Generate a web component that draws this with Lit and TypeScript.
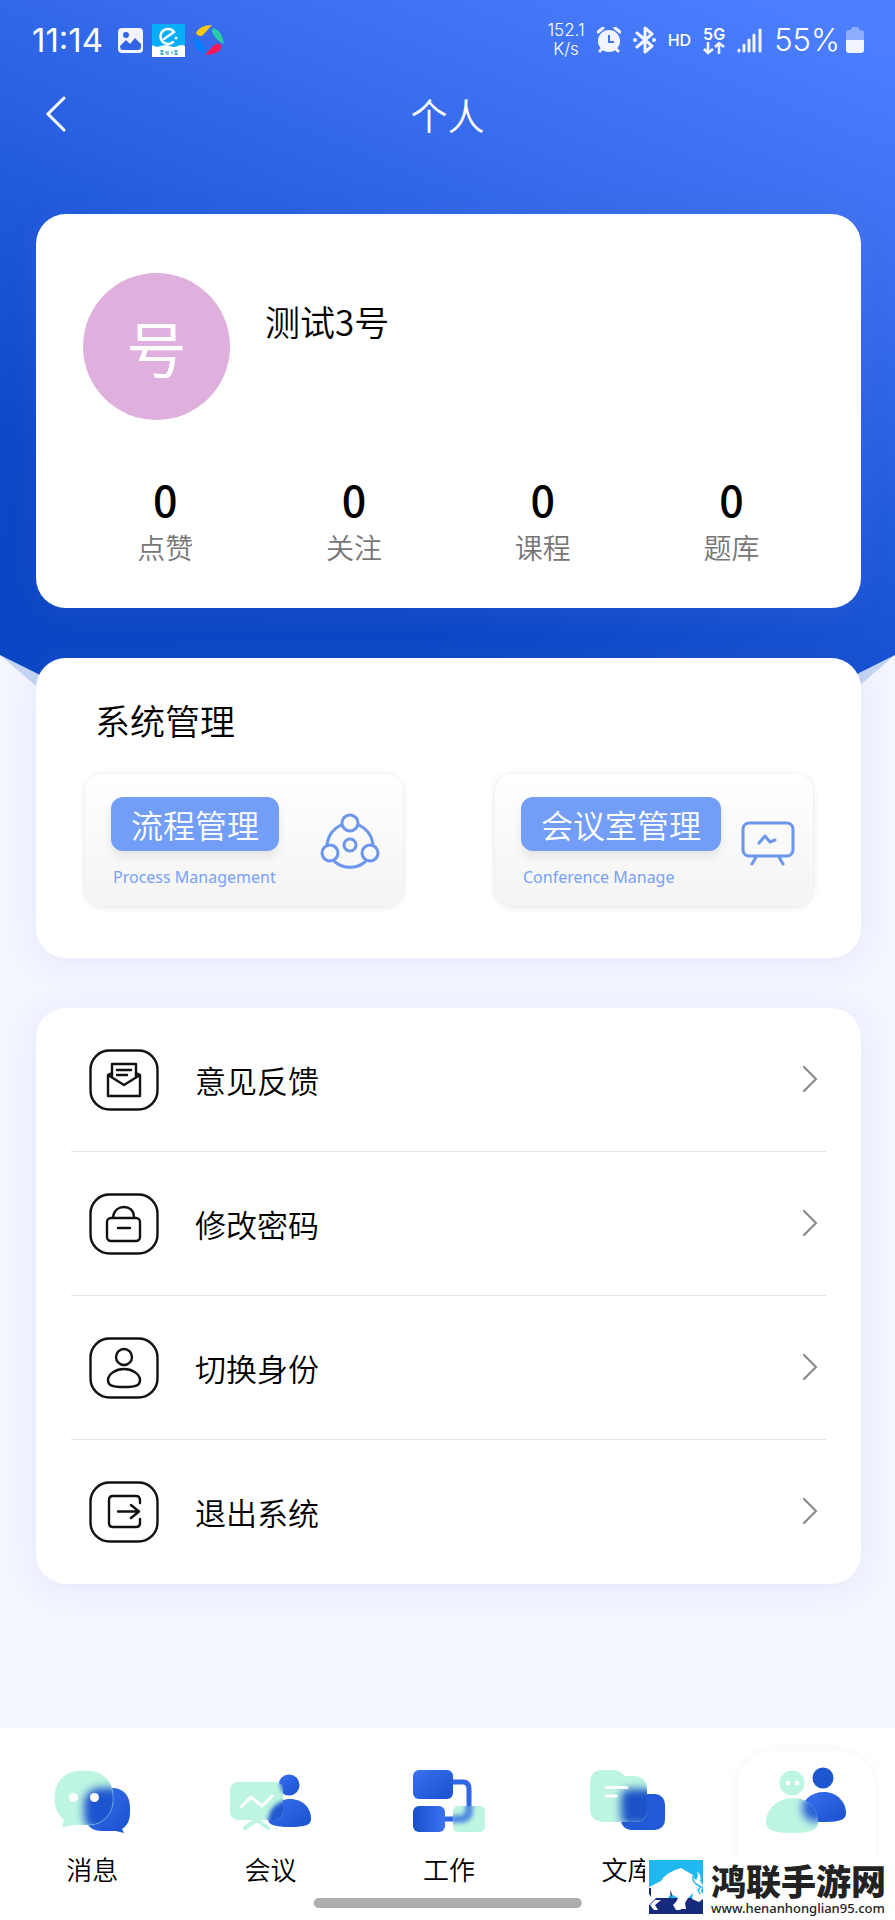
import { LitElement, html, css, svg, TemplateResult } from 'lit'
import { customElement, property, state } from 'lit/decorators.js'
import { classMap } from 'lit/directives/class-map.js'

interface Stat {
  label: string
  value: number
}

interface MenuItem {
  label: string
  icon: TemplateResult
}

interface Tab {
  id: string
  label: string
  icon: TemplateResult
}

const stats: Stat[] = [
  { label: '点赞', value: 0 },
  { label: '关注', value: 0 },
  { label: '课程', value: 0 },
  { label: '题库', value: 0 },
]

const menuItems: MenuItem[] = [
  {
    label: '意见反馈',
    icon: svg`
      <path d="M22 27V14H46V27"/>
      <path d="M27 20H41M27 25H37"/>
      <path d="M22 23L18 25V46H50V25L46 23M18 25L34 35L50 25"/>`,
  },
  {
    label: '修改密码',
    icon: svg`
      <rect x="17" y="24" width="33" height="23" rx="4"/>
      <path d="M23 23C24 16 29 13 34 13S44 16 44 23M28 34H40"/>`,
  },
  {
    label: '切换身份',
    icon: svg`
      <circle cx="34" cy="19" r="8"/>
      <path d="M18 42C18 36 26 31 34 31S50 36 50 42C50 47 47 49 34 49S18 47 18 42Z"/>`,
  },
  {
    label: '退出系统',
    icon: svg`
      <path d="M50 21V18Q50 14 46 14H23Q19 14 19 18V41Q19 45 23 45H46Q50 45 50 41V37"/>
      <path d="M28 29.500H49M41 23L49 29.500L41 36"/>`,
  },
]

const tabs: Tab[] = [
  {
    id: 'message',
    label: '消息',
    icon: svg`
      <defs>
        <clipPath id="message-clip"><rect x="3" y="5" width="58" height="54" rx="24"/></clipPath>
      </defs>
      <path fill="url(#blue)" d="M54 22H60C72 22 78 30 78 42V46C78 54 76 59 70 63L72 67L64 65H50Q35 65 32 50V40Q34 22 54 22Z"/>
      <rect x="3" y="5" width="58" height="54" rx="24" fill="#bdf5e1"/>
      <path fill="#bdf5e1" d="M13 50L10 61L22 59L30 55Z"/>
      <g clip-path="url(#message-clip)">
        <rect x="32" y="22" width="46" height="44" rx="16" fill="#1d55cf" filter="url(#frost)"/>
      </g>
      <rect x="3" y="5" width="58" height="54" rx="24" fill="none" stroke="#bdf5e1" stroke-opacity=".35"/>
      <circle cx="21.500" cy="31.500" r="4.500" fill="#fff"/>
      <circle cx="42.500" cy="31.500" r="4.500" fill="#fff"/>`,
  },
  {
    id: 'meeting',
    label: '会议',
    icon: svg`
      <defs>
        <clipPath id="meeting-clip"><rect x="-1" y="16" width="53" height="38" rx="8"/></clipPath>
      </defs>
      <circle cx="58" cy="19" r="10.500" fill="url(#blue)"/>
      <path fill="url(#blue)" d="M37 53C37 42 46 33 59 33S80 42 80 53C80 59 74 61 59 61S37 59 37 53Z"/>
      <path d="M26 54L14 62M26 54L37 62" stroke="#bdf5e1" stroke-width="4" stroke-linecap="round" fill="none"/>
      <rect x="-1" y="16" width="53" height="38" rx="8" fill="#bdf5e1"/>
      <g clip-path="url(#meeting-clip)">
        <g filter="url(#soft)">
          <circle cx="59" cy="19" r="10" fill="#3a70dc"/>
          <path fill="#2158d0" d="M37 56C37 44 46 34 59 34V62H38Z"/>
        </g>
      </g>
      <path d="M10 41L20 31L31 40L41 30" stroke="#fff" stroke-width="3" stroke-linecap="round" stroke-linejoin="round" fill="none"/>`,
  },
  {
    id: 'work',
    label: '工作',
    icon: svg`
      <defs>
        <clipPath id="work-clip"><rect x="44" y="40" width="32" height="26" rx="5"/></clipPath>
      </defs>
      <path d="M43 16H54Q60 16 60 23V41M35 53H46" stroke="#2f66e6" stroke-width="5" fill="none"/>
      <rect x="4" y="4" width="40" height="29" rx="6" fill="url(#blue)"/>
      <rect x="4" y="40" width="32" height="26" rx="6" fill="url(#blue-rev)"/>
      <rect x="44" y="40" width="32" height="26" rx="5" fill="#bdf5e1"/>
      <g clip-path="url(#work-clip)">
        <path d="M60 36V44Q60 53 50 53H42" stroke="#3a70e0" stroke-opacity=".8" stroke-width="8" fill="none" filter="url(#soft)"/>
      </g>`,
  },
  {
    id: 'library',
    label: '文库',
    icon: svg`
      <defs>
        <clipPath id="library-clip"><path d="M14 4H27Q32 4 38 10H48Q60 11 60 24V44Q60 56 48 56H15Q3 54 3 43V16Q3 5 14 4Z"/></clipPath>
      </defs>
      <rect x="34" y="28" width="44" height="36" rx="10" fill="#2259d4"/>
      <path fill="#bdf5e1" d="M14 4H27Q32 4 38 10H48Q60 11 60 24V44Q60 56 48 56H15Q3 54 3 43V16Q3 5 14 4Z"/>
      <g clip-path="url(#library-clip)">
        <rect x="34" y="23" width="36" height="36" rx="8" fill="#1a52c8" filter="url(#frost)"/>
      </g>
      <path d="M19 21.500H40M19 30H29" stroke="#fff" stroke-width="3" stroke-linecap="round"/>`,
  },
  {
    id: 'profile',
    label: '个人',
    icon: svg`
      <defs>
        <clipPath id="profile-clip"><path d="M0 56C0 43 12 32 27 32S52 43 52 56C52 64 44 67 27 67S0 65 0 56Z"/></clipPath>
      </defs>
      <circle cx="57" cy="12" r="10.500" fill="#1d56cf"/>
      <path fill="url(#blue)" d="M35 46C36 34 45 26 58 26S80 36 80 47C80 53 75 56 58 56S35 55 35 46Z"/>
      <circle cx="26" cy="17" r="12.500" fill="#bdf5e1"/>
      <path fill="#bdf5e1" d="M0 56C0 43 12 32 27 32S52 43 52 56C52 64 44 67 27 67S0 65 0 56Z"/>
      <g clip-path="url(#profile-clip)">
        <circle cx="50" cy="42" r="14" fill="#2a62d8" filter="url(#frost)"/>
      </g>
      <circle cx="22" cy="17" r="2.500" fill="#fff"/>
      <circle cx="31" cy="17" r="2.500" fill="#fff"/>`,
  },
]

@customElement('status-bar')
export class StatusBar extends LitElement {
  static styles = css`
  :host {
    display: flex;
    align-items: center;
    justify-content: space-between;
    height: 80px;
    padding: 0 31px 0 32px;
    color: #fff;
    font-family: Inter, "Noto Sans", sans-serif;
    font-weight: 400;
  }
  .group {
    display: flex;
    align-items: center;
  }
  .left {
    gap: 8px;
  }
  .right {
    gap: 12px;
  }
  svg {
    display: block;
  }
  .time {
    font-size: 33px;
    line-height: 40px;
    margin-right: 6px;
  }
  .speed {
    font-size: 17px;
    line-height: 19px;
    font-weight: 300;
    text-align: center;
  }
  .speed span {
    display: block;
  }
  .hd {
    font-size: 16px;
    line-height: 24px;
    font-weight: 500;
  }
  .network {
    font-size: 16px;
    line-height: 16px;
    font-weight: 600;
  }
  .battery {
    display: flex;
    align-items: center;
    gap: 6px;
    font-size: 31px;
    line-height: 40px;
    font-weight: 300;
  }
  `

  render() {
    return html`
    <div class="group left">
      <span class="time">11:14</span>
      <svg width="27" height="27" viewBox="0 0 27 27">
        <rect x="1" y="1" width="25" height="25" rx="4" fill="#f2f5ff"/>
        <circle cx="9" cy="8" r="3" fill="#3265e5"/>
        <path d="M3 19L9 13L13 17L18 11L24 17V20Q24 23 21 23H6Q3 23 3 19Z" fill="#3265e5"/>
      </svg>
      <svg width="33" height="33" viewBox="0 0 33 33">
        <rect width="33" height="33" fill="#08aefa"/>
        <path d="M0 21Q4 24 9 22T18 22T26 22T33 22V33H0Z" fill="#fff"/>
        <path d="M12 15L22 8A7.500 7.500 0 1 0 21 18" fill="none" stroke="#fff" stroke-width="2.500" stroke-linecap="round"/>
        <circle cx="24" cy="14" r="1.500" fill="#fff"/>
        <path d="M8 27H12M8 30H12M10 26V31M14 27V30H17M16 27V29M20 30V27M22 27H26M22 30H26M24 26V31" stroke="#129bb5" fill="none"/>
      </svg>
      <svg width="32" height="32" viewBox="0 0 32 32">
        <path d="M3 9Q7 1 19 1L10 11Q6 14 3 9Z" fill="#ffca10"/>
        <path d="M20 4Q29 6 31 20Q24 17 20 10Q18 6 20 4Z" fill="#28cfa4"/>
        <path d="M28 21Q29 30 12 31L20 22Q25 18 28 21Z" fill="#ff1654"/>
        <path d="M1 13Q6 14 11 22Q13 27 10 30Q0 25 1 13Z" fill="#087cff"/>
      </svg>
    </div>
    <div class="group right">
      <div class="speed"><span>152.1</span><span>K/s</span></div>
      <svg width="24" height="26" viewBox="0 0 24 26">
        <circle cx="12" cy="14" r="11" fill="#f2f5ff"/>
        <path d="M1 5L6 1M23 5L18 1M3 24L6 21M21 24L18 21" stroke="#f2f5ff" stroke-width="3" stroke-linecap="round"/>
        <path d="M12 8V15H17" fill="none" stroke="#4273f5" stroke-width="2"/>
      </svg>
      <svg width="23" height="28" viewBox="0 0 23 28">
        <path d="M4 7L19 20L12 26V2L19 8L4 21" fill="none" stroke="#f2f5ff" stroke-width="3" stroke-linejoin="round" stroke-linecap="round"/>
        <circle cx="2" cy="14" r="2" fill="#f2f5ff"/>
        <circle cx="21" cy="14" r="2" fill="#f2f5ff"/>
      </svg>
      <span class="hd">HD</span>
      <div class="network">
        5G
        <svg width="22" height="13" viewBox="0 0 22 13">
          <path d="M5 0V11M1 7L5 11L10 7M16 12V1M12 5L16 1L21 5" fill="none" stroke="#f2f5ff" stroke-width="2.500"/>
        </svg>
      </div>
      <svg width="25" height="25" viewBox="0 0 25 25">
        <path d="M2 22V23M7 17V23M12 12V23M17 7V23M23 2V23" stroke="#f2f5ff" stroke-width="3" stroke-linecap="round"/>
      </svg>
      <div class="battery">
        55%
        <svg width="18" height="26" viewBox="0 0 18 26">
          <path d="M5 2Q5 0 7 0H11Q13 0 13 2V3H15Q18 3 18 6V14H0V6Q0 3 3 3H5Z" fill="#8eadff"/>
          <path d="M0 13H18V23Q18 26 15 26H3Q0 26 0 23Z" fill="#f2f5ff"/>
        </svg>
      </div>
    </div>
    `
  }
}

@customElement('menu-row')
export class MenuRow extends LitElement {
  @property() label = ''
  @property({ attribute: false }) icon?: TemplateResult

  static styles = css`
  :host {
    display: block;
  }
  .row {
    display: flex;
    align-items: center;
    width: 100%;
    height: 144px;
    padding: 0 8px 0 18px;
    border: 0;
    background: none;
    color: #000;
    font-family: inherit;
    font-size: 31px;
    line-height: 40px;
    font-weight: inherit;
    text-align: left;
    cursor: pointer;
  }
  .icon {
    width: 71px;
    height: 62px;
    margin-right: 35px;
    fill: none;
    stroke: #111;
    stroke-linejoin: round;
    stroke-linecap: round;
  }
  .label {
    flex: 1;
  }
  .arrow {
    fill: none;
    stroke: #888;
    stroke-width: 2;
    stroke-linecap: round;
  }
  `

  render() {
    return html`
    <button class="row" type="button">
      <svg class="icon" viewBox="-1 -1 71 62" stroke-width="2.400">
        <rect x="0.500" y="0.500" width="67" height="59" rx="19"/>
        ${this.icon}
      </svg>
      <span class="label">${this.label}</span>
      <svg class="arrow" width="16" height="28" viewBox="0 0 16 28">
        <path d="M2 1L14 13L2 25"/>
      </svg>
    </button>
    `
  }
}

@customElement('site-badge')
export class SiteBadge extends LitElement {
  static styles = css`
  :host {
    display: flex;
    gap: 8px;
    padding: 5px 0 4px 4px;
    background: #fff;
    color: #222;
  }
  svg {
    display: block;
  }
  .name {
    font-size: 35px;
    line-height: 40px;
    font-weight: 900;
  }
  .url {
    font-family: "Noto Sans", sans-serif;
    font-size: 13px;
    line-height: 16px;
    font-weight: 500;
  }
  `

  render() {
    return html`
    <svg width="54" height="54" viewBox="0 0 54 54">
      <path d="M0 0H54V40H0Z" fill="#20b8ef"/>
      <path d="M0 38H54V54H0Z" fill="#172b7c"/>
      <path d="M0 27L12 21Q17 12 32 8L44 15Q44 18 47 20Q50 17 48 11Q53 16 51 21L54 25L52 31L54 34V39L50 42L43 39L44 33L39 38L36 43L37 49L31 49L26 44L29 38L22 34L19 38H7L0 45Z" fill="#fff"/>
      <path d="M44 16Q43 21 47 24L52 27L49 30L51 34" fill="none" stroke="#20b8ef" stroke-width="1.500"/>
      <path d="M12 40L6 45L9 50L5 50L1 45L6 40ZM35 40L29 45L32 50L27 50L24 45L29 40Z" fill="#fff"/>
      <path d="M0 28V34L2 37V28ZM21 30L23 34L22 38Z" fill="#172b7c"/>
    </svg>
    <div>
      <div class="name">鸿联手游网</div>
      <div class="url">www.henanhonglian95.com</div>
    </div>
    `
  }
}

@customElement('app-root')
export class AppRoot extends LitElement {
  @state() private activeTab = 'profile'

  static styles = css`
  :host {
    display: block;
    font-family: "Noto Sans CJK SC", "Noto Sans", sans-serif;
    font-weight: 350;
    color: #000;
  }
  * {
    box-sizing: border-box;
  }
  h1, h2, p, ul, dl, dd {
    margin: 0;
    padding: 0;
    font-weight: inherit;
  }
  .page {
    position: relative;
    display: flex;
    flex-direction: column;
    min-height: 100vh;
    background: #f3f6ff;
    overflow: hidden;
  }
  .backdrop {
    position: absolute;
    top: 0;
    left: 0;
    width: 100%;
    height: 760px;
  }
  .backdrop div {
    position: absolute;
    inset: 0;
  }
  .backdrop .pale {
    background: #c3d4f3;
    clip-path: polygon(0 655px, 100% 655px, 90% 732px, 10% 732px);
  }
  .backdrop .blue {
    background: linear-gradient(202deg, #4c7fff 4%, #3a6eee 25%, #205bdb 48%, #0c48c6 72%, #0a46c3 100%);
    clip-path: polygon(0 0, 100% 0, 100% 655px, 85% 722px, 15% 722px, 0 655px);
  }
  .content {
    position: relative;
    display: flex;
    flex-direction: column;
    flex: 1;
  }
  .nav {
    display: grid;
    grid-template-columns: 60px 1fr 60px;
    align-items: center;
    height: 70px;
    padding: 0 28px;
    color: #fff;
  }
  .back {
    height: 60px;
    padding: 0 17px;
    border: 0;
    background: none;
    cursor: pointer;
  }
  .back svg {
    display: block;
  }
  .nav h1 {
    font-size: 37px;
    line-height: 48px;
    text-align: center;
  }
  main {
    display: flex;
    flex-direction: column;
    gap: 50px;
    padding: 64px 34px 50px 36px;
  }
  .card {
    background: #fff;
    border-radius: 30px;
    box-shadow: 0 4px 30px rgba(120, 120, 220, .12);
  }
  .profile {
    padding: 59px 35px 37px;
  }
  .user {
    display: flex;
    gap: 35px;
    padding-left: 12px;
  }
  .avatar {
    display: grid;
    place-items: center;
    width: 147px;
    height: 147px;
    border-radius: 50%;
    background: #dfafde;
    color: #fff;
    font-size: 60px;
    line-height: 60px;
    font-weight: 400;
  }
  .user h2 {
    padding-top: 24px;
    font-size: 35px;
    line-height: 48px;
  }
  .stats {
    display: grid;
    grid-template-columns: repeat(4, 1fr);
    padding-top: 53px;
    text-align: center;
  }
  .stat {
    display: flex;
    flex-direction: column-reverse;
  }
  .stat dt {
    color: #777;
    font-size: 28px;
    line-height: 48px;
  }
  .stat dd {
    font-size: 43px;
    line-height: 50px;
    font-weight: 500;
  }
  .system {
    padding: 38px 48px 52px 49px;
  }
  .system h2 {
    padding-left: 10px;
    font-size: 35px;
    line-height: 48px;
  }
  .tiles {
    display: grid;
    grid-template-columns: 318px 318px;
    justify-content: space-between;
    padding-top: 30px;
  }
  .tile {
    display: flex;
    align-items: center;
    justify-content: space-between;
    height: 132px;
    padding: 6px 18px 0 26px;
    border-radius: 18px;
    background: linear-gradient(#fff, #f4f4f4);
    box-shadow: 0 1px 6px rgba(0, 0, 0, .12);
    color: #78a1f6;
    text-decoration: none;
  }
  .tile-name {
    display: inline-block;
    padding: 0 20px;
    border-radius: 12px;
    background: #739ef7;
    box-shadow: 0 6px 10px rgba(0, 0, 0, .08);
    color: #fff;
    font-size: 32px;
    line-height: 54px;
  }
  .tile-sub {
    display: block;
    padding: 14px 2px 0;
    font-family: "Noto Sans", sans-serif;
    font-size: 16px;
    line-height: 24px;
    font-weight: 400;
  }
  .tile svg {
    fill: none;
    stroke: #6b96ec;
    stroke-width: 3;
    stroke-linecap: round;
    stroke-linejoin: round;
  }
  .menu {
    padding: 0 35px;
    list-style: none;
  }
  .menu li + li {
    box-shadow: 0 -1px 0 #e4e4e4;
  }
  .tabs {
    position: relative;
    display: grid;
    grid-template-columns: repeat(5, 1fr);
    justify-items: center;
    height: 192px;
    margin-top: auto;
    padding: 23px 0 0 3px;
    background: #fff;
  }
  .tab {
    display: flex;
    flex-direction: column;
    align-items: center;
    gap: 14px;
    width: 138px;
    padding-top: 15px;
    border-radius: 36px;
    color: #000;
    font-size: 26px;
    line-height: 38px;
    text-decoration: none;
  }
  .tab.active {
    box-shadow: 0 0 12px rgba(0, 0, 0, .05);
  }
  .tab svg {
    overflow: visible;
  }
  .home-bar {
    position: absolute;
    left: 50%;
    bottom: 12px;
    width: 30%;
    height: 10px;
    border-radius: 5px;
    background: #adadad;
    transform: translateX(-50%);
  }
  site-badge {
    position: absolute;
    right: 0;
    bottom: 0;
    width: 250px;
    box-sizing: border-box;
  }
  `

  render() {
    return html`
    <div class="page">
      <div class="backdrop">
        <div class="pale"></div>
        <div class="blue"></div>
      </div>
      <div class="content">
        <status-bar></status-bar>
        <header class="nav">
          <button class="back" type="button" aria-label="返回">
            <svg width="22" height="38" viewBox="0 0 22 38">
              <path d="M19 2L3 18L19 34" fill="none" stroke="#fff" stroke-width="3" stroke-linecap="round"/>
            </svg>
          </button>
          <h1>个人</h1>
        </header>
        <main>
          ${this.renderProfile()}
          ${this.renderSystem()}
          <ul class="card menu">
            ${menuItems.map(item => html`
              <li><menu-row .label=${item.label} .icon=${item.icon}></menu-row></li>
            `)}
          </ul>
        </main>
        ${this.renderTabs()}
      </div>
    </div>
    `
  }

  renderProfile() {
    return html`
    <section class="card profile">
      <div class="user">
        <div class="avatar">号</div>
        <h2>测试3号</h2>
      </div>
      <dl class="stats">
        ${stats.map(stat => html`
          <div class="stat">
            <dt>${stat.label}</dt>
            <dd>${stat.value}</dd>
          </div>
        `)}
      </dl>
    </section>
    `
  }

  renderSystem() {
    return html`
    <section class="card system">
      <h2>系统管理</h2>
      <div class="tiles">
        <a class="tile" href="#process">
          <span>
            <span class="tile-name">流程管理</span>
            <span class="tile-sub">Process Management</span>
          </span>
          <svg width="70" height="60" viewBox="0 0 70 60">
            <path d="M26 12A25 25 0 0 0 12 31M44 12A25 25 0 0 1 58 31M20 49A24 24 0 0 0 50 49"/>
            <circle cx="35" cy="10" r="8"/>
            <circle cx="15" cy="40" r="8"/>
            <circle cx="55" cy="40" r="8"/>
            <circle cx="35" cy="32" r="6"/>
          </svg>
        </a>
        <a class="tile" href="#conference">
          <span>
            <span class="tile-name">会议室管理</span>
            <span class="tile-sub">Conference Manage</span>
          </span>
          <svg width="54" height="48" viewBox="0 0 54 48">
            <rect x="2" y="4" width="50" height="33" rx="6"/>
            <path d="M15 38L11 45M38 38L42 45"/>
            <path d="M18 24L24 17L29 23L34 21"/>
          </svg>
        </a>
      </div>
    </section>
    `
  }

  renderTabs() {
    return html`
    <nav class="tabs">
      ${tabs.map(tab => html`
        <a
          class=${classMap({ tab: true, active: tab.id === this.activeTab })}
          href="#${tab.id}"
          aria-label=${tab.label}
          @click=${() => this.selectTab(tab.id)}
        >
          <svg width="80" height="70" viewBox="0 0 80 70">
            <defs>
              <linearGradient id="blue" x1="0" y1="0" x2="1" y2="1">
                <stop offset="0" stop-color="#3b71f2"/>
                <stop offset="1" stop-color="#1850cc"/>
              </linearGradient>
              <linearGradient id="blue-rev" x1="0" y1="0" x2="1" y2="0">
                <stop offset="0" stop-color="#1850cc"/>
                <stop offset="1" stop-color="#3b71f2"/>
              </linearGradient>
              <filter id="frost" x="-50%" y="-50%" width="200%" height="200%">
                <feGaussianBlur stdDeviation="4"/>
              </filter>
              <filter id="soft" x="-50%" y="-50%" width="200%" height="200%">
                <feGaussianBlur stdDeviation="2"/>
              </filter>
            </defs>
            ${tab.icon}
          </svg>
          ${tab.id === 'profile' ? '' : html`<span>${tab.label}</span>`}
        </a>
      `)}
      <div class="home-bar"></div>
      <site-badge></site-badge>
    </nav>
    `
  }

  selectTab(id: string) {
    this.activeTab = id
  }
}
